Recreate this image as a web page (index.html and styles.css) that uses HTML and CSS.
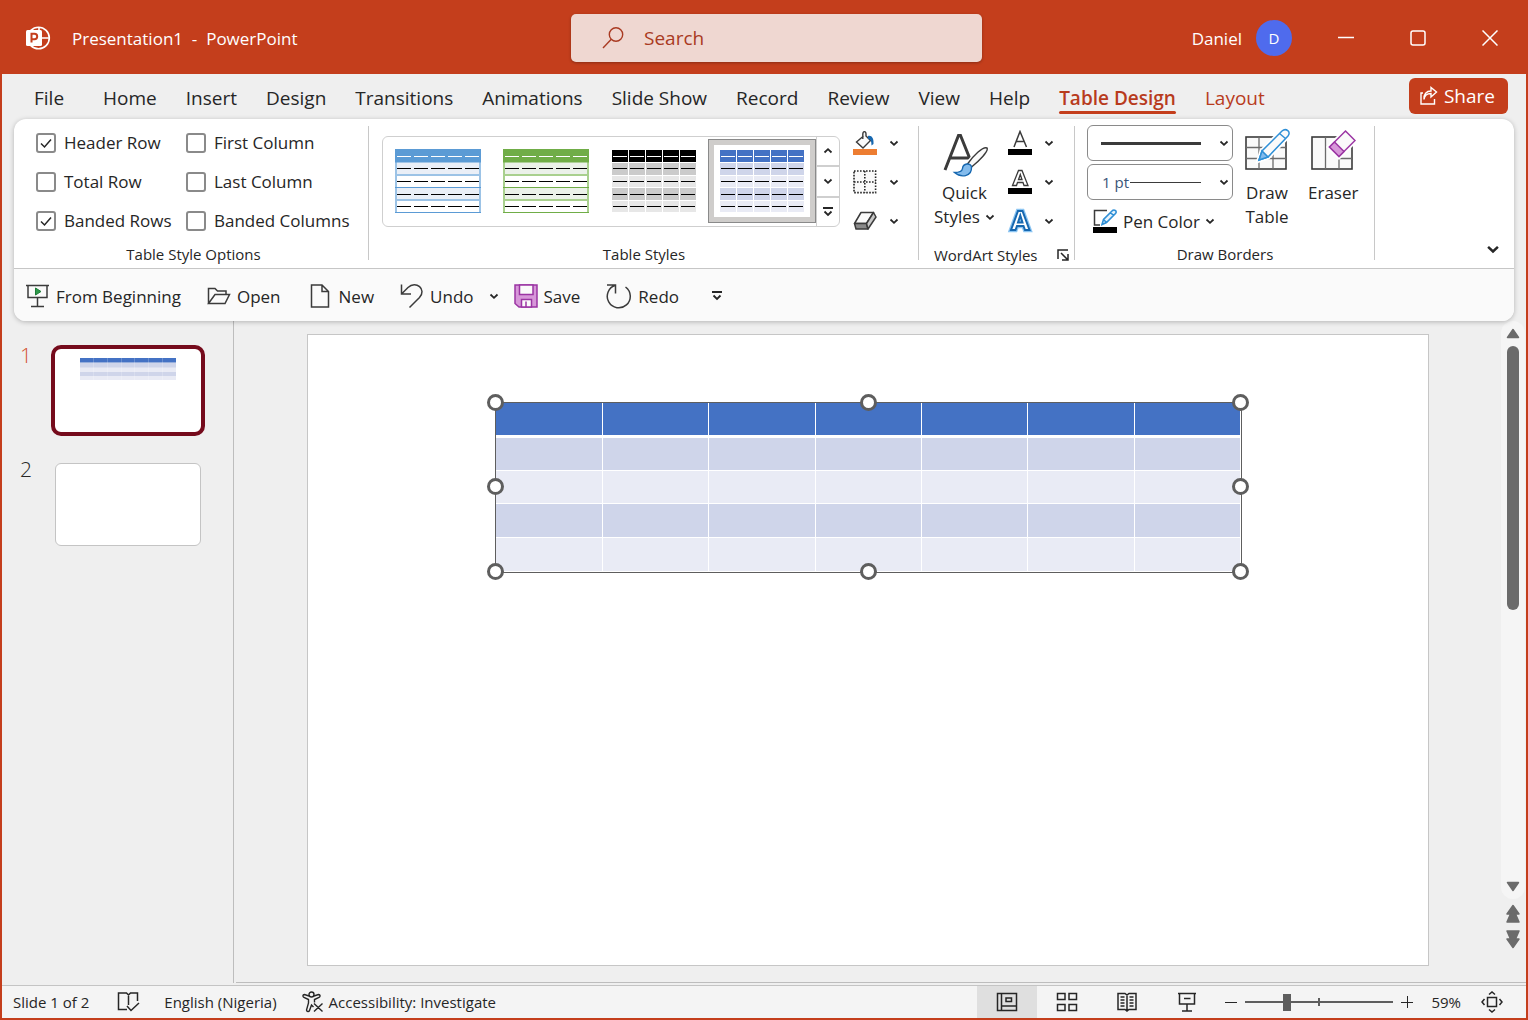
FILE: index.html
```html
<!DOCTYPE html>
<html lang="en">
<head>
    <meta charset="UTF-8">
    <meta name="viewport" content="width=device-width, initial-scale=1.0">
    <title>Presentation1 - PowerPoint</title>
    <link rel="stylesheet" href="styles.css">
</head>
<body>
    <!-- shared icon shapes -->
    <svg class="defs" width="0" height="0" aria-hidden="true">
        <symbol id="chev" viewBox="0 0 10 10"><path d="M1.5 3.5 5 6.8 8.5 3.5" fill="none" stroke="#262626" stroke-width="1.8"/></symbol>
        <symbol id="chev-up" viewBox="0 0 10 10"><path d="M1.5 6.5 5 3.2 8.5 6.5" fill="none" stroke="#262626" stroke-width="1.8"/></symbol>
        <symbol id="more" viewBox="0 0 12 12"><path d="M1 2H11M2.5 5.5 6 9 9.5 5.5" fill="none" stroke="#262626" stroke-width="1.8"/></symbol>
        <symbol id="dashes" viewBox="0 0 86 66">
            <path d="M2 7.5H86" stroke="#fff" stroke-dasharray="14 3"/>
            <path d="M2 19.5H86M2 32.5H86M2 45.5H86M2 57.5H86" stroke="#000" stroke-dasharray="14 3"/>
        </symbol>
        <symbol id="gridlines" viewBox="0 0 86 66">
            <path d="M17.5 0V64M34.5 0V64M51.5 0V64M68.5 0V64M0 13.5H86M0 26.5H86M0 38.5H86M0 51.5H86" stroke="#fff" stroke-width="1"/>
        </symbol>
    </svg>

    <header class="titlebar">
        <div class="doc">
            <svg class="logo" width="26" height="26" viewBox="0 0 26 26">
                <circle cx="13.500" cy="13" r="10.800" fill="none" stroke="#fff" stroke-width="1.600"/>
                <path d="M14 2V13H25" fill="none" stroke="#fff" stroke-width="1.600"/>
                <rect x="1" y="5" width="16" height="16" rx="1.500" fill="#fff"/>
                <path d="M6.500 17.500V8.800H9.500a2.600 2.600 0 0 1 0 5.400H6.500" fill="none" stroke="#c43e1c" stroke-width="2"/>
            </svg>
            <span>Presentation1&nbsp; -&nbsp; PowerPoint</span>
        </div>
        <label class="search">
            <svg width="22" height="24" viewBox="0 0 22 24" fill="none" stroke="#a93a22" stroke-width="1.4"><circle cx="14" cy="8.500" r="6.700"/><path d="M9.300 13.300 1 22"/></svg>
            <input type="search" placeholder="Search" aria-label="Search">
        </label>
        <div class="account">
            <span>Daniel</span>
            <span class="avatar">D</span>
            <button class="win" aria-label="Minimize"><svg width="16" height="16"><path d="M0 7.500H16" stroke="#fff" stroke-width="1.500"/></svg></button>
            <button class="win" aria-label="Maximize"><svg width="16" height="16"><rect x="1" y="1" width="14" height="14" rx="2" fill="none" stroke="#fff" stroke-width="1.500"/></svg></button>
            <button class="win" aria-label="Close"><svg width="16" height="16"><path d="M.5.5 15.500 15.500M15.500.5.5 15.500" stroke="#fff" stroke-width="1.500"/></svg></button>
        </div>
    </header>

    <nav class="tabs">
        <a href="#" class="file">File</a>
        <a href="#">Home</a>
        <a href="#">Insert</a>
        <a href="#">Design</a>
        <a href="#">Transitions</a>
        <a href="#">Animations</a>
        <a href="#">Slide Show</a>
        <a href="#">Record</a>
        <a href="#">Review</a>
        <a href="#">View</a>
        <a href="#">Help</a>
        <a href="#" class="context active">Table Design</a>
        <a href="#" class="context">Layout</a>
        <button class="share">
            <svg width="20" height="20" viewBox="0 0 20 20" fill="none" stroke="#fff" stroke-width="1.400"><path d="M4 7H2V18H15.500V13"/><path d="M5 13.500C5.500 9.500 8 7.500 12 7.500V11L17.500 6 12 1.500V5C7.500 5 4.500 8 5 13.500Z"/></svg>
            Share
        </button>
    </nav>

    <section class="ribbon">
        <div class="groups">
            <div class="group options">
                <div class="checks">
                    <label><input type="checkbox" checked>Header Row</label>
                    <label><input type="checkbox">First Column</label>
                    <label><input type="checkbox">Total Row</label>
                    <label><input type="checkbox">Last Column</label>
                    <label><input type="checkbox" checked>Banded Rows</label>
                    <label><input type="checkbox">Banded Columns</label>
                </div>
                <div class="caption">Table Style Options</div>
            </div>

            <div class="group styles">
                <div class="styles-body">
                    <div class="gallery">
                        <button class="style" aria-label="Light Style, blue">
                            <svg width="86" height="66">
                                <path d="M0 13H86V26H0ZM0 39H86V51H0Z" fill="#eaeff7"/>
                                <path d="M1 0V64M85 0V64M0 26H86M0 51H86" stroke="#9cc3e6" stroke-width="2"/>
                                <path d="M0 38.500H86M0 63.500H86" stroke="#5b9bd5"/>
                                <rect width="86" height="13.500" fill="#5b9bd5"/>
                                <use href="#dashes"/>
                            </svg>
                        </button>
                        <button class="style" aria-label="Light Style, green">
                            <svg width="86" height="66">
                                <path d="M0 13H86V26H0ZM0 39H86V51H0Z" fill="#ebf1e9"/>
                                <path d="M1 0V64M85 0V64M0 26H86M0 51H86" stroke="#a9d08e" stroke-width="2"/>
                                <path d="M0 38.500H86M0 63.500H86" stroke="#70ad47"/>
                                <rect width="86" height="13.500" fill="#70ad47"/>
                                <use href="#dashes"/>
                            </svg>
                        </button>
                        <button class="style" aria-label="Medium Style, black">
                            <svg width="86" height="66">
                                <rect x="1" y="1" width="84" height="62" fill="#e7e7e7"/>
                                <path d="M1 13H85V26H1ZM1 39H85V51H1Z" fill="#cbcbcb"/>
                                <rect x="1" y="1" width="84" height="12" fill="#000"/>
                                <use href="#gridlines"/>
                                <use href="#dashes"/>
                            </svg>
                        </button>
                        <button class="style selected" aria-label="Medium Style, blue">
                            <svg width="86" height="66">
                                <rect x="1" y="1" width="84" height="62" fill="#e9ebf5"/>
                                <path d="M1 13H85V26H1ZM1 39H85V51H1Z" fill="#cfd5ea"/>
                                <rect x="1" y="1" width="84" height="12" fill="#4472c4"/>
                                <use href="#gridlines"/>
                                <use href="#dashes"/>
                            </svg>
                        </button>
                        <div class="scroller">
                            <button aria-label="Previous styles"><svg width="10" height="10"><use href="#chev-up"/></svg></button>
                            <button aria-label="Next styles"><svg width="10" height="10"><use href="#chev"/></svg></button>
                            <button aria-label="More styles"><svg width="12" height="12"><use href="#more"/></svg></button>
                        </div>
                    </div>
                    <div class="stack">
                        <button aria-label="Shading">
                            <svg width="26" height="26" viewBox="0 0 26 26">
                                <path d="M11.500 6 4.500 12 11 18 18.500 10.500 14 6V4C14 .8 10.800.8 10.800 4.500V9" fill="#fafafa" stroke="#3b3b3b" stroke-width="1.400"/>
                                <path d="M16 6C19.500 5 22 8 21.500 14L19.500 15.500C19.500 11 18.500 9 16 9Z" fill="#1768b0"/>
                                <rect x="1" y="19" width="24" height="6" fill="#ed7d31"/>
                            </svg>
                            <svg width="10" height="10"><use href="#chev"/></svg>
                        </button>
                        <button aria-label="Borders">
                            <svg width="26" height="26" viewBox="0 0 26 26" fill="#fafafa" stroke="#262626" stroke-width="1.600" stroke-dasharray="1.600 1.400"><path d="M2 2H23.600V23.600H2V2M2 13H23.600M12.800 2V23.600"/></svg>
                            <svg width="10" height="10"><use href="#chev"/></svg>
                        </button>
                        <button aria-label="Effects">
                            <svg width="26" height="26" viewBox="0 0 26 26" stroke="#3b3b3b" stroke-width="1.500" stroke-linejoin="round">
                                <path d="M9 4.500H21.500L14.500 15.500H2.500Z" fill="#fafafa"/>
                                <path d="M2.500 15.500H14.500L16 21H4Z" fill="#8a8a8a"/>
                                <path d="M21.500 4.500 24 9 16 21 14.500 15.500Z" fill="#c8c8c8"/>
                            </svg>
                            <svg width="10" height="10"><use href="#chev"/></svg>
                        </button>
                    </div>
                </div>
                <div class="caption">Table Styles</div>
            </div>

            <div class="group wordart">
                <div class="row">
                    <button class="big quick-styles">
                        <svg width="46" height="46" viewBox="0 0 46 46">
                            <path d="M2 38 15.500 3.500H17.500L27 27M7 26H26" fill="none" stroke="#3b3b3b" stroke-width="3"/>
                            <path d="M44 16C40 14 30 24 24.500 32L28 35.500C36 29 46 19 44 16Z" fill="#fff" stroke="#fff" stroke-width="4"/>
                            <path d="M44 16C40 14 30 24 24.500 32L28 35.500C36 29 46 19 44 16Z" fill="#fafafa" stroke="#3b3b3b" stroke-width="1.400"/>
                            <path d="M28.500 35C28 30.500 20 31 19.500 36.500 19 40 14 40.500 11.500 40.500 18 46 29 45 28.500 35Z" fill="#83bbec" stroke="#1768b0" stroke-width="1.400"/>
                        </svg>
                        <span>Quick</span>
                        <span>Styles <svg width="10" height="10"><use href="#chev"/></svg></span>
                    </button>
                    <div class="stack">
                        <button aria-label="Text Fill">
                            <svg width="26" height="26" viewBox="0 0 26 26"><path d="M7 17 13 1.500 19.500 17M9 11.500H17.500" fill="none" stroke="#3b3b3b" stroke-width="1.500"/><rect x="1" y="19" width="24" height="6"/></svg>
                            <svg width="10" height="10"><use href="#chev"/></svg>
                        </button>
                        <button aria-label="Text Outline">
                            <svg width="26" height="26" viewBox="0 0 26 26"><path d="M5.500 16.500 11.500 1.500H15L21 16.500H17L16 13.500H10.500L9.500 16.500ZM11.500 10.500H15L13.300 5.500Z" fill="#fff" stroke="#3b3b3b" stroke-width="1.300"/><rect x="1" y="19" width="24" height="6"/></svg>
                            <svg width="10" height="10"><use href="#chev"/></svg>
                        </button>
                        <button aria-label="Text Effects">
                            <svg width="26" height="26" viewBox="0 0 26 26"><path d="M4 22 11 3H15.500L22.500 22H18L16.500 18H10L8.500 22ZM11 14.500H15.500L13.300 7.500Z" fill="#fff" stroke="#8cc5f2" stroke-width="4.500"/><path d="M4 22 11 3H15.500L22.500 22H18L16.500 18H10L8.500 22ZM11 14.500H15.500L13.300 7.500Z" fill="#fff" stroke="#1768b0" stroke-width="2"/></svg>
                            <svg width="10" height="10"><use href="#chev"/></svg>
                        </button>
                    </div>
                </div>
                <div class="caption launch">WordArt Styles
                    <button aria-label="WordArt options"><svg width="12" height="12" viewBox="0 0 12 12" fill="none" stroke="#262626" stroke-width="1.500"><path d="M1 10V1H11M4 4 10.500 10.500M11 5V11H5"/></svg></button>
                </div>
            </div>

            <div class="group borders">
                <div class="row">
                    <div class="pens">
                        <select class="pen-style" aria-label="Pen Style"><option></option></select>
                        <select class="pen-weight" aria-label="Pen Weight"><option>1 pt</option></select>
                        <button class="pen-color">
                            <svg width="26" height="26" viewBox="0 0 26 26">
                                <path d="M15 2.500H2.500V17H8" fill="none" stroke="#3b3b3b" stroke-width="1.500"/>
                                <path d="M10 16.500 11.500 11.500 20.500 2.500C22.500 1 25.500 3.500 23.500 5.500L14.500 14.500ZM18.500 4.500 21.500 7.500M11.500 11.500 14.500 14.500" fill="#e6f2fb" stroke="#2e8fd6" stroke-width="1.600"/>
                                <rect x="1" y="19" width="24" height="6"/>
                            </svg>
                            <span>Pen Color</span>
                            <svg width="10" height="10"><use href="#chev"/></svg>
                        </button>
                    </div>
                    <button class="big">
                        <svg width="46" height="46" viewBox="0 0 46 46">
                            <rect x="2" y="9" width="40" height="32" fill="#fafafa" stroke="#3b3b3b" stroke-width="1.600"/>
                            <path d="M2 19.500H42M2 30.500H42M15 9V41M29 9V41" stroke="#6b6b6b" stroke-width="1.300"/>
                            <path d="M15 32 18 23 38 3C42-.5 47.500 4 44 8L24 29Z" fill="#fff" stroke="#fff" stroke-width="5"/>
                            <path d="M15 32 18 23 38 3C42-.5 47.500 4 44 8L24 29Z" fill="#fafafa" stroke="#2e8fd6" stroke-width="1.500"/>
                            <path d="M15 32 18 23 24 29Z" fill="#83bbec" stroke="#2e8fd6" stroke-width="1.500"/>
                            <path d="M35.500 5.500 41.500 10.500" stroke="#2e8fd6" stroke-width="1.500"/>
                        </svg>
                        <span>Draw</span>
                        <span>Table</span>
                    </button>
                    <button class="big">
                        <svg width="46" height="46" viewBox="0 0 46 46">
                            <rect x="2" y="9" width="40" height="32" fill="#fafafa" stroke="#3b3b3b" stroke-width="1.600"/>
                            <path d="M15.500 9V41M29 41V30.500H42" fill="none" stroke="#6b6b6b" stroke-width="1.300"/>
                            <path d="M35.500 3 45 12.500 29 28.500 19.500 19Z" fill="#fff" stroke="#fff" stroke-width="5"/>
                            <path d="M35.500 3 45 12.500 29 28.500 19.500 19Z" fill="#fafafa" stroke="#9b35a3" stroke-width="1.500"/>
                            <path d="M24.500 14 34 23.500 29 28.500 19.500 19Z" fill="#d797d9" stroke="#9b35a3" stroke-width="1.500"/>
                        </svg>
                        <span>Eraser</span>
                    </button>
                </div>
                <div class="caption">Draw Borders</div>
            </div>

            <button class="collapse" aria-label="Collapse ribbon"><svg width="14" height="14"><use href="#chev"/></svg></button>
        </div>

        <div class="quick">
            <button class="play">
                <svg width="24" height="24" viewBox="0 0 24 24" fill="none" stroke="#3b3b3b" stroke-width="1.500"><path d="M0 1.500H23M2 1.500V13.500H21V1.500M11.500 13.500V22.500M5 22.500H18"/><path d="M9.500 4 15 7.500 9.500 11Z" fill="#2e9a4b" stroke="#1e7d38" stroke-width="1"/></svg>
                From Beginning
            </button>
            <button class="open">
                <svg width="24" height="24" viewBox="0 0 24 24" fill="none" stroke="#3b3b3b" stroke-width="1.500"><path d="M1.500 19.500V4.500H8L10.500 7H19V10.500M1.500 19.500 8 10.500H22.500L18 19.500Z"/></svg>
                Open
            </button>
            <button class="new">
                <svg width="20" height="24" viewBox="0 0 20 24" fill="none" stroke="#3b3b3b" stroke-width="1.500"><path d="M1.500 1H12L18.500 7.500V23H1.500ZM12 1V7.500H18.500"/></svg>
                New
            </button>
            <button class="undo">
                <svg width="24" height="26" viewBox="0 0 24 26" fill="none" stroke="#3b3b3b" stroke-width="1.500"><path d="M1.500 1.500V11H11M1.500 11 8 4.500C16-3 27 6.500 19.500 14.500L9.500 24.500"/></svg>
                Undo
            </button>
            <button class="undo-more" aria-label="Undo history"><svg width="10" height="10"><use href="#chev"/></svg></button>
            <button class="save">
                <svg width="24" height="24" viewBox="0 0 24 24" stroke="#9b35a3" stroke-width="1.500"><path d="M1 1H23V23H5L1 19.500Z" fill="#d797d9"/><path d="M5.500 1V10.500H19V1ZM7.500 23V15.500H17.500V23Z" fill="#fafafa"/><path d="M12 17.500V23" fill="none"/></svg>
                Save
            </button>
            <button class="redo">
                <svg width="26" height="26" viewBox="0 0 26 26" fill="none" stroke="#3b3b3b" stroke-width="1.500"><path d="M1 2H9.500V10.500M9.500 2.300A11.500 11.500 0 1 0 19.500 4"/></svg>
                Redo
            </button>
            <button class="customize" aria-label="Customize toolbar"><svg width="12" height="12"><use href="#more"/></svg></button>
        </div>
    </section>

    <main class="workspace">
        <aside class="slides">
            <a href="#" class="entry current">
                <span>1</span>
                <div class="thumb">
                    <svg viewBox="0 0 146 83">
                        <rect x="25" y="9" width="96" height="22" fill="#e9ebf5"/>
                        <path d="M25 14H121V18.500H25ZM25 23H121V27H25Z" fill="#cfd5ea"/>
                        <rect x="25" y="9" width="96" height="4.500" fill="#4472c4"/>
                        <path d="M38.500 9V31M52.500 9V31M66.500 9V31M79.500 9V31M93.500 9V31M107.500 9V31" stroke="#fff" stroke-opacity=".2"/>
                    </svg>
                </div>
            </a>
            <a href="#" class="entry">
                <span>2</span>
                <div class="thumb"></div>
            </a>
        </aside>
        <div class="stage">
            <div class="slide">
                <div class="object">
                    <table>
                        <tbody>
                            <tr><th></th><th></th><th></th><th></th><th></th><th></th><th></th></tr>
                            <tr><td></td><td></td><td></td><td></td><td></td><td></td><td></td></tr>
                            <tr><td></td><td></td><td></td><td></td><td></td><td></td><td></td></tr>
                            <tr><td></td><td></td><td></td><td></td><td></td><td></td><td></td></tr>
                            <tr><td></td><td></td><td></td><td></td><td></td><td></td><td></td></tr>
                        </tbody>
                    </table>
                    <i class="handle top left"></i>
                    <i class="handle top center"></i>
                    <i class="handle top right"></i>
                    <i class="handle middle left"></i>
                    <i class="handle middle right"></i>
                    <i class="handle bottom left"></i>
                    <i class="handle bottom center"></i>
                    <i class="handle bottom right"></i>
                </div>
            </div>
        </div>
        <div class="scrollbar">
            <div class="track">
                <button aria-label="Scroll up"><svg width="14" height="11" viewBox="0 0 14 11"><path d="M7 1.500 12.500 9.500H1.500Z" fill="#6b6b6b" stroke="#6b6b6b" stroke-width="1.500" stroke-linejoin="round"/></svg></button>
                <div class="rail"><div class="grip"></div></div>
                <button aria-label="Scroll down"><svg width="14" height="11" viewBox="0 0 14 11"><path d="M7 9.500 12.500 1.500H1.500Z" fill="#6b6b6b" stroke="#6b6b6b" stroke-width="1.500" stroke-linejoin="round"/></svg></button>
            </div>
            <button class="page" aria-label="Previous slide"><svg width="16" height="20" viewBox="0 0 16 20"><path d="M8 1.500 14 10H10.500L14 18H2L5.500 10H2Z" fill="#6b6b6b" stroke="#6b6b6b" stroke-width="1.500" stroke-linejoin="round"/></svg></button>
            <button class="page" aria-label="Next slide"><svg width="16" height="20" viewBox="0 0 16 20"><path d="M8 18.500 14 10H10.500L14 2H2L5.500 10H2Z" fill="#6b6b6b" stroke="#6b6b6b" stroke-width="1.500" stroke-linejoin="round"/></svg></button>
        </div>
    </main>

    <footer class="status">
        <span>Slide 1 of 2</span>
        <button class="spell" aria-label="Spelling"><svg width="24" height="22" viewBox="0 0 24 22" fill="none" stroke="#262626" stroke-width="1.500"><path d="M11.500 3.500V14M10 18.500H1.500V2H9.500L11.500 4 13.500 2H20.500V10M10 15 14 19.500 22 12"/></svg></button>
        <button class="lang">English (Nigeria)</button>
        <button class="access">
            <svg width="22" height="22" viewBox="0 0 22 22" fill="none" stroke="#262626" stroke-width="1.400"><circle cx="9.500" cy="3.500" r="2.500"/><path d="M7 5 2.500 3.500C.5 3.500.5 5.500 2 6.500L6.500 8.500V12L4.500 19C4.500 21 7 21 7.500 19.500L9.500 14 11.500 16M12 5 16.500 3.500C18.500 3.500 18.500 5.500 17 6.500L12.500 8.500V11.500M12 12.500 20.500 20.500M20.500 12.500 12 20.500"/></svg>
            Accessibility: Investigate
        </button>
        <div class="views">
            <button class="on" aria-label="Normal view"><svg width="22" height="20" viewBox="0 0 22 20" fill="none" stroke="#262626" stroke-width="1.500"><path d="M1.500 1.500H20.500V18.500H1.500ZM5.500 1.500V18.500M5.500 14H20.500M10 6H15.500V9.500H10Z"/></svg></button>
            <button aria-label="Slide sorter"><svg width="22" height="20" viewBox="0 0 22 20" fill="none" stroke="#262626" stroke-width="1.500"><path d="M1.500 1.500H9V7.500H1.500ZM13 1.500H20.500V7.500H13ZM1.500 12.500H9V18.500H1.500ZM13 12.500H20.500V18.500H13Z"/></svg></button>
            <button aria-label="Reading view"><svg width="22" height="20" viewBox="0 0 22 20" fill="none" stroke="#262626" stroke-width="1.500"><path d="M11 2.500V19M2 1.500H9L11 3 13 1.500H20V17.500H13L11 19 9 17.500H2Z"/><path d="M4.500 5H8.500M4.500 8H8.500M4.500 11H8.500M4.500 14H8.500M13.500 5H17.500M13.500 8H17.500M13.500 11H17.500M13.500 14H17.500"/></svg></button>
            <button aria-label="Slide show"><svg width="20" height="20" viewBox="0 0 20 20" fill="none" stroke="#262626" stroke-width="1.500"><path d="M1 1.500H19M2.500 1.500V12H17.500V1.500M10 12V19M5 19H15M7 6.500H13.500"/></svg></button>
        </div>
        <div class="zoom">
            <button aria-label="Zoom out"><svg width="12" height="12"><path d="M0 6.500H12" stroke="#262626"/></svg></button>
            <input type="range" min="0" max="100" value="27" aria-label="Zoom">
            <button aria-label="Zoom in"><svg width="12" height="12"><path d="M0 6.500H12M6.500 0V12" stroke="#262626"/></svg></button>
        </div>
        <button class="percent">59%</button>
        <button class="fit" aria-label="Fit slide to window"><svg width="22" height="22" viewBox="0 0 22 22" fill="none" stroke="#262626" stroke-width="1.500"><path d="M6.500 6.500H15.500V15.500H6.500ZM8 3.500 11 1 14 3.500M8 18.500 11 21 14 18.500M3.500 8 1 11 3.500 14M18.500 8 21 11 18.500 14"/></svg></button>
    </footer>
</body>
</html>
```
FILE: styles.css
```css
* {
    box-sizing: border-box;
}
body {
    margin: 0;
    height: 100vh;
    display: flex;
    flex-direction: column;
    border: 2px solid #c43e1c;
    border-top: none;
    background-color: #efefef;
    font-family: "Open Sans", "Segoe UI", sans-serif;
    font-size: 17px;
    color: #262626;
    white-space: nowrap;
}
.defs {
    display: none;
}
button {
    margin: 0;
    padding: 0;
    border: none;
    background: none;
    font: inherit;
    color: inherit;
    cursor: pointer;
}
a {
    color: inherit;
    text-decoration: none;
}
svg {
    flex: none;
}

/* title bar */
.titlebar {
    flex: none;
    height: 74px;
    display: grid;
    grid-template-columns: 569fr 411fr 544fr;
    align-items: center;
    padding-top: 2px;
    background-color: #c43e1c;
    color: white;
}
.doc {
    display: flex;
    align-items: center;
    gap: 21px;
    padding-left: 23px;
}
.search {
    height: 48px;
    display: flex;
    align-items: center;
    gap: 18px;
    padding-left: 31px;
    border-radius: 5px;
    background-color: #efd7d1;
    box-shadow: 0 1px 3px rgba(0, 0, 0, 0.3);
}
.search input {
    flex: 1;
    min-width: 0;
    border: none;
    outline: none;
    background: none;
    font: inherit;
    font-size: 19px;
    color: #a93a22;
}
.search input::placeholder {
    color: #a93a22;
}
.account {
    display: flex;
    align-items: center;
    justify-content: flex-end;
}
.avatar {
    width: 36px;
    height: 36px;
    margin: 0 18px 0 14px;
    border-radius: 50%;
    background-color: #4f6bed;
    font-size: 15px;
    line-height: 36px;
    text-align: center;
}
.win {
    width: 72px;
    height: 72px;
    display: flex;
    align-items: center;
    justify-content: center;
}

/* tabs */
.tabs {
    flex: none;
    height: 45px;
    display: flex;
    align-items: center;
    gap: 29px;
    padding: 0 18px 0 32px;
    font-size: 19px;
    line-height: 30px;
}
.tabs a {
    padding-top: 2px;
}
.tabs .file {
    margin-right: 10px;
}
.tabs .context {
    color: #b83b1d;
}
.tabs .active {
    position: relative;
    font-weight: 600;
}
.tabs .active::after {
    content: "";
    position: absolute;
    left: 0;
    right: 0;
    bottom: -1px;
    height: 3px;
    border-radius: 2px;
    background-color: #c43e1c;
}
.share {
    height: 36px;
    display: flex;
    align-items: center;
    gap: 5px;
    margin: 0 0 2px auto;
    padding: 0 13px 0 10px;
    border-radius: 6px;
    background-color: #c43e1c;
    color: white;
}

/* ribbon */
.ribbon {
    flex: none;
    margin: 0 12px;
    border-radius: 12px;
    background-color: white;
    box-shadow: 0 1px 5px rgba(0, 0, 0, 0.25);
    overflow: hidden;
    z-index: 1;
}
.groups {
    height: 150px;
    display: flex;
    border-bottom: 1px solid #c6c6c6;
}
.group {
    position: relative;
    display: flex;
    flex-direction: column;
    justify-content: space-between;
    padding-top: 4px;
}
.group::after {
    content: "";
    position: absolute;
    top: 7px;
    right: 0;
    bottom: 8px;
    width: 1px;
    background-color: #c8c8c8;
}
.caption {
    height: 27px;
    font-size: 15px;
    line-height: 26px;
    text-align: center;
}
.row {
    display: flex;
}
.options {
    width: 355px;
    padding-left: 22px;
}
.options .caption {
    margin-left: -18px;
}
.checks {
    display: grid;
    grid-template-columns: 150px auto;
    grid-auto-rows: 39px;
}
.checks label {
    display: flex;
    align-items: center;
    gap: 8px;
}
.checks input {
    appearance: none;
    width: 20px;
    height: 20px;
    margin: 0;
    border: 2px solid #8a8a8a;
    border-radius: 3px;
    background-color: white;
}
.checks input:checked {
    background: url("data:image/svg+xml,%3Csvg xmlns='http://www.w3.org/2000/svg' viewBox='0 0 16 16'%3E%3Cpath d='M3 8.500 6.500 12 13 4.500' fill='none' stroke='%23262626' stroke-width='1.500'/%3E%3C/svg%3E") center / 16px no-repeat;
}
.stack {
    display: flex;
    flex-direction: column;
}
.stack button {
    height: 39px;
    display: flex;
    align-items: center;
    gap: 11px;
}

.styles {
    width: 550px;
    padding-left: 13px;
}
.styles .caption {
    margin-left: -13px;
}
.styles-body {
    display: flex;
    gap: 12px;
}
.gallery {
    height: 91px;
    display: flex;
    margin-top: 13px;
    padding-left: 1px;
    border: 1px solid #cfcfcf;
    border-radius: 6px;
    overflow: hidden;
}
.style {
    width: 108px;
    height: 84px;
    display: flex;
    align-items: flex-start;
    justify-content: center;
    margin-top: 2px;
    padding-top: 10px;
}
.style.selected {
    padding-top: 4px;
    border: 6px solid #cfcdcb;
    outline: 1px solid #8a8a8a;
    outline-offset: -1px;
}
.scroller {
    width: 23px;
    display: flex;
    flex-direction: column;
    border-left: 1px solid #cfcfcf;
}
.scroller button {
    flex: 1;
    display: flex;
    align-items: center;
    justify-content: center;
}
.scroller button + button {
    border-top: 2px solid #cfcfcf;
}

.wordart {
    width: 156px;
    padding-left: 15px;
}
.wordart .row {
    gap: 12px;
}
.big {
    display: flex;
    flex-direction: column;
    align-items: center;
    line-height: 24px;
}
.big > svg {
    margin: 3px 0 7px;
}
.big span {
    display: flex;
    align-items: center;
    gap: 5px;
}
.quick-styles > svg {
    margin: 9px 0 3px 4px;
}
.launch {
    display: flex;
    justify-content: space-between;
    align-items: center;
    padding-right: 6px;
}
.launch button {
    display: flex;
}

.borders {
    width: 300px;
    padding: 6px 0 0 12px;
}
.borders .caption {
    margin-left: -12px;
}
.borders .big:last-child {
    margin-left: 18px;
}
.pens {
    width: 146px;
    display: flex;
    flex-direction: column;
    gap: 3px;
    margin-right: 11px;
}
.pens select {
    appearance: none;
    width: 100%;
    height: 36px;
    padding: 0 14px;
    border: 1px solid #8a8a8a;
    border-radius: 6px;
    font: inherit;
    font-size: 15px;
    color: #3b5578;
    background-color: white;
    background-repeat: no-repeat;
}
.pens .pen-style {
    background-image: url("data:image/svg+xml,%3Csvg xmlns='http://www.w3.org/2000/svg' viewBox='0 0 10 10'%3E%3Cpath d='M1.500 3.500 5 6.800 8.500 3.500' fill='none' stroke='%23262626' stroke-width='1.800'/%3E%3C/svg%3E"), linear-gradient(#3b3b3b, #3b3b3b);
    background-size: 10px 10px, 100px 3px;
    background-position: right 3px center, 13px center;
}
.pens .pen-weight {
    background-image: url("data:image/svg+xml,%3Csvg xmlns='http://www.w3.org/2000/svg' viewBox='0 0 10 10'%3E%3Cpath d='M1.500 3.500 5 6.800 8.500 3.500' fill='none' stroke='%23262626' stroke-width='1.800'/%3E%3C/svg%3E"), linear-gradient(#3b3b3b, #3b3b3b);
    background-size: 10px 10px, 71px 1px;
    background-position: right 3px center, 42px center;
}
.pen-color {
    height: 36px;
    display: flex;
    align-items: center;
    gap: 5px;
    padding-left: 5px;
}
.collapse {
    display: flex;
    align-self: flex-end;
    margin: 0 14px 12px auto;
}

/* quick access toolbar */
.quick {
    height: 52px;
    display: flex;
    align-items: center;
    padding: 2px 0 0 12px;
    background-color: #fafafa;
}
.quick button {
    height: 36px;
    display: flex;
    align-items: center;
    gap: 6px;
    margin-right: 26px;
}
.quick .open {
    margin-right: 29px;
}
.quick .new {
    gap: 9px;
}
.quick .undo,
.quick .undo-more {
    margin-right: 15px;
}
.quick .redo {
    margin-right: 32px;
}

/* editing area */
.workspace {
    flex: 1;
    min-height: 0;
    display: flex;
}
.slides {
    width: 232px;
    padding: 24px 28px 0 18px;
    border-right: 1px solid #bdbdbd;
    margin-bottom: 2px;
}
.entry {
    display: flex;
    justify-content: space-between;
    margin-bottom: 23px;
    font-size: 21px;
    font-weight: 300;
    line-height: 20px;
}
.current {
    color: #d35230;
}
.thumb {
    width: 146px;
    aspect-ratio: 146 / 83;
    margin: 4px 4px 0 0;
    border: 1px solid #c4c4c4;
    border-radius: 6px;
    background-color: white;
}
.thumb svg {
    display: block;
}
.current .thumb {
    width: 154px;
    aspect-ratio: 154 / 91;
    margin: 0;
    border: 4px solid #750b1c;
    border-radius: 10px;
}
.stage {
    flex: 1;
    display: flex;
    align-items: flex-start;
    justify-content: center;
    margin: 0 0 2px 2px;
    padding: 13px 0 16px;
    border-bottom: 1px solid #bdbdbd;
}
.slide {
    position: relative;
    height: 100%;
    aspect-ratio: 1122 / 632;
    border: 1px solid #c6c6c6;
    background-color: white;
}
.object {
    position: absolute;
    left: 16.7%;
    top: 10.7%;
    width: 66.7%;
    height: 27%;
    border: 1px solid #5e5e5e;
}
.object table {
    width: 100%;
    height: 100%;
    border-collapse: collapse;
    table-layout: fixed;
}
.object tr {
    height: 20%;
}
.object th,
.object td {
    padding: 0;
    border: 1px solid white;
    border-width: 0 1px 1px 0;
}
.object th {
    border-bottom-width: 3px;
    background-color: #4472c4;
}
.object td {
    background-color: #e9ebf5;
}
.object tr:nth-child(even) td {
    background-color: #cfd5ea;
}
.handle {
    position: absolute;
    width: 17px;
    height: 17px;
    margin: -9px;
    border: 3px solid #5e5e5e;
    border-radius: 50%;
    background-color: white;
}
.handle.top {
    top: 0;
}
.handle.middle {
    top: 50%;
}
.handle.bottom {
    top: 100%;
}
.handle.left {
    left: 0;
}
.handle.center {
    left: 50%;
}
.handle.right {
    left: 100%;
}
.scrollbar {
    width: 26px;
    display: flex;
    flex-direction: column;
    align-items: center;
    gap: 5px;
    margin-bottom: 2px;
    padding-bottom: 33px;
    border-bottom: 1px solid #bdbdbd;
}
.scrollbar button {
    display: flex;
    justify-content: center;
}
.track {
    flex: 1;
    width: 24px;
    display: flex;
    flex-direction: column;
    align-items: center;
    gap: 7px;
    padding: 7px 0;
    border-radius: 12px;
    background-color: #f5f5f5;
}
.rail {
    flex: 1;
}
.grip {
    width: 12px;
    height: 50%;
    border-radius: 6px;
    background-color: #6b6b6b;
}

/* status bar */
.status {
    flex: none;
    height: 33px;
    display: flex;
    align-items: center;
    padding-left: 11px;
    border-top: 1px solid #c4c4c4;
    background-color: #f4f4f4;
    font-size: 15px;
}
.status button {
    display: flex;
    align-items: center;
    justify-content: center;
}
.status .spell {
    margin: 0 23px 0 28px;
}
.status .access {
    gap: 5px;
    margin-left: 25px;
}
.views {
    align-self: stretch;
    display: flex;
    margin-left: auto;
}
.views button {
    width: 60px;
}
.views .on {
    background-color: #dfdfdf;
}
.zoom {
    display: flex;
    align-items: center;
    gap: 8px;
    margin: 0 18px 0 8px;
}
.zoom input {
    appearance: none;
    width: 148px;
    height: 17px;
    margin: 0;
    background: linear-gradient(#5e5e5e, #5e5e5e) center / 100% 2px no-repeat, linear-gradient(#5e5e5e, #5e5e5e) center / 2px 8px no-repeat;
}
.zoom input::-webkit-slider-thumb {
    appearance: none;
    width: 8px;
    height: 17px;
    background-color: #5e5e5e;
}
.status .fit {
    margin: 0 23px 0 20px;
}
```
